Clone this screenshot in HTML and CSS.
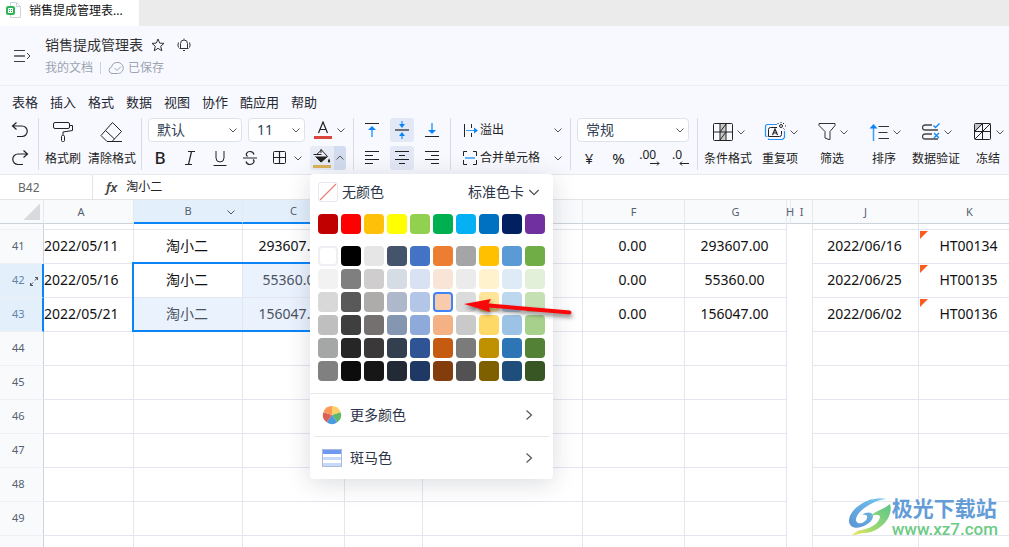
FILE: index.html
```html
<!DOCTYPE html>
<html lang="zh-CN">
<head>
<meta charset="utf-8">
<title>销售提成管理表</title>
<link rel="stylesheet" href="styles.css">
</head>
<body>
<svg class="defs" width="0" height="0" aria-hidden="true">
  <symbol id="chev" viewBox="0 0 12 12"><path d="M2.500 4.500 6 8l3.500-3.500" fill="none" stroke="currentColor"/></symbol>
  <symbol id="next" viewBox="0 0 12 12"><path d="M3.500 1.500 8.500 6l-5 4.500" fill="none" stroke="currentColor" stroke-width="1.200"/></symbol>
</svg>

<nav class="tabs">
  <a class="tab" href="#">
    <svg width="16" height="16" viewBox="0 0 16 16"><path d="M4.500.5h6l4 4v11h-10z" fill="#fff" stroke="#ccd3e0"/><path d="M10.500.5v4h4" fill="none" stroke="#ccd3e0"/><rect y="4" width="9" height="9" rx="2" fill="#2fb556"/><path d="M2.500 6.500h4v4h-4zM4.500 6.500v4M2.500 8.500h4" fill="none" stroke="#fff"/></svg>
    <span>销售提成管理表...</span>
  </a>
</nav>

<header class="doc">
  <button class="menu-toggle" aria-label="展开菜单"><svg width="18" height="14" viewBox="0 0 18 14" fill="none" stroke="#3c4043"><path d="M0 1.500h11M0 12.500h11"/><path d="M0 7h11" stroke="#777" stroke-width="2"/><path d="m13 4 3 3-3 3"/></svg></button>
  <div class="doc-info">
    <div class="doc-title">
      <h1>销售提成管理表</h1>
      <button aria-label="收藏"><svg width="14" height="14" viewBox="0 0 14 14"><path d="M7 1 8.700 5.100 13 5.400 9.700 8.200 10.800 12.800 7 10.300 3.200 12.800 4.300 8.200 1 5.400 5.300 5.100Z" fill="none" stroke="#333"/></svg></button>
      <button aria-label="提醒"><svg width="14" height="14" viewBox="0 0 14 14" fill="none" stroke="#333"><path d="M2.500 10.500h9M3.500 10.500V5.500a3.500 3.500 0 0 1 7 0v5M6 12.500h2M7 .5v1M1.500 4.500Q.3 7 1.500 9.500M12.500 4.500Q13.700 7 12.500 9.500"/></svg></button>
    </div>
    <div class="doc-sub">
      <a href="#">我的文档</a>
      <i></i>
      <svg width="17" height="14" viewBox="0 0 17 14" fill="none" stroke="#9aa3b2"><path d="M10 12.500H4a3.300 3.300 0 0 1-.3-6.500A5.500 5.500 0 0 1 9 1.500a5.500 5.500 0 0 1 1.500 11"/><path d="m6.500 7 2.500 2.500 4-4"/></svg>
      <span>已保存</span>
    </div>
  </div>
</header>

<section class="ribbon">
  <nav class="menus">
    <a href="#">表格</a><a href="#">插入</a><a href="#">格式</a><a href="#">数据</a><a href="#">视图</a><a href="#">协作</a><a href="#">酷应用</a><a href="#">帮助</a>
  </nav>
  <div class="tools">
    <div class="group history">
      <button class="tool" aria-label="撤销"><svg width="18" height="18" viewBox="0 0 18 18" fill="none" stroke="#222"><path d="M5.500 1.500 1.500 5l4 3.500M1.500 5H11a5 5 0 0 1 0 10.500H6" stroke-width="1.200"/></svg></button>
      <button class="tool" aria-label="重做"><svg width="18" height="18" viewBox="0 0 18 18" fill="none" stroke="#222"><path d="m12.500 1.500 4 3.500-4 3.500M16.500 5H7a5 5 0 0 0 0 10.500h5" stroke-width="1.200"/></svg></button>
    </div>

    <div class="group brushes">
      <button class="big"><span class="pic"><svg width="22" height="22" viewBox="0 0 22 22" fill="none" stroke="#222"><rect x="1.500" y="1.500" width="16" height="6" rx="1.500"/><path d="M17.500 4.500h3v5l-9.500 1.500v3"/><rect x="9.500" y="14.500" width="3" height="6" rx="1"/></svg></span>格式刷</button>
      <button class="big"><span class="pic"><svg width="24" height="22" viewBox="0 0 24 22" fill="none" stroke="#222"><path d="M7 20.500 1 14.500 12.500 1.500l9 9-9.500 10ZM5.500 9.500l9 8.500M7 20.500h15"/></svg></span>清除格式</button>
    </div>

    <div class="group">
      <div class="row">
        <label class="combo font"><select aria-label="字体"><option>默认</option></select><svg><use href="#chev"/></svg></label>
        <label class="combo size"><select aria-label="字号"><option>11</option></select><svg><use href="#chev"/></svg></label>
        <div class="split">
          <button class="tool ink" aria-label="字体颜色"><svg width="18" height="18" viewBox="0 0 18 18"><path d="M4.500 12 9 1l4.500 11M6 8.500h6" fill="none" stroke="#222" stroke-width="1.200"/><path d="M0 15h18v3H0z" fill="#d9473c"/></svg></button>
          <button class="arrow" aria-label="选择字体颜色"><svg><use href="#chev"/></svg></button>
        </div>
      </div>
      <div class="row marks">
        <button class="tool bold">B</button>
        <button class="tool" aria-label="斜体"><svg width="14" height="16" viewBox="0 0 14 16" fill="none" stroke="#222" stroke-width="1.200"><path d="M5 1.500h7M2 14.500h7M8.500 1.500l-3 13"/></svg></button>
        <button class="tool" aria-label="下划线"><svg width="14" height="16" viewBox="0 0 14 16" fill="none" stroke="#222"><path d="M3 1v7a4 4 0 0 0 8 0V1M.5 15.500h13"/></svg></button>
        <button class="tool" aria-label="删除线"><svg width="14" height="16" viewBox="0 0 14 16" fill="none" stroke="#222"><path d="M11 4.500C10.500 2.500 9 1.500 7 1.500c-3 0-5 3-2.500 5M3 11.500c.5 2 2 3 4 3 3 0 5.500-3 3-5M0 8h14" stroke-width="1.200"/></svg></button>
        <div class="split">
          <button class="tool" aria-label="边框"><svg width="14" height="14" viewBox="0 0 14 14" fill="none" stroke="#222"><rect x=".5" y=".5" width="12" height="12" rx="1"/><path d="M6.500.5v12M.5 6.500h12" stroke-width="1.200"/></svg></button>
          <button class="arrow" aria-label="选择边框"><svg><use href="#chev"/></svg></button>
        </div>
        <div class="split fill-split">
          <button class="tool" aria-label="填充颜色"><svg width="18" height="20" viewBox="0 0 18 20"><path d="M8 1v4M3.500 6.500 8.500 2l6 6.500" fill="none" stroke="#222"/><path d="M.5 6.500h8M2.500 8.500 8 14l6.500-5.500" fill="none" stroke="#222"/><path d="M2.500 8.500h12L8 14.500z" fill="#222"/><path d="M16 10.500c-1.500 2-1.500 4 0 4s1.500-2 0-4z" fill="#222"/><path d="M0 17h18v3H0z" fill="#d9b25c"/></svg></button>
          <button class="arrow open" aria-label="选择填充颜色" aria-expanded="true"><svg><use href="#chev"/></svg></button>

          <div class="palette">
            <div class="palette-head">
              <button class="no-color"><svg width="20" height="20" viewBox="0 0 20 20"><rect x=".5" y=".5" width="19" height="19" rx="2" fill="#fff" stroke="#e6e8f0"/><path d="M2 18 18 2" fill="none" stroke="#e8837c" stroke-width="1.200"/></svg>无颜色</button>
              <button class="card">标准色卡<svg><use href="#chev"/></svg></button>
            </div>
            <div class="swatches" id="standard"></div>
            <div class="swatches" id="theme"></div>
            <button class="palette-item"><svg width="20" height="20" viewBox="-10 -10 20 20"><path d="M0 0V-9A9 9 0 0 1 8.600-2.800Z" fill="#fdd06b"/><path d="M0 0 8.600-2.800A9 9 0 0 1 5.300 7.300Z" fill="#62b866"/><path d="M0 0 5.300 7.300A9 9 0 0 1-5.300 7.300Z" fill="#4a9be0"/><path d="M0 0-5.300 7.300A9 9 0 0 1-8.600-2.800Z" fill="#dc6055"/><path d="M0 0-8.600-2.800A9 9 0 0 1 0-9Z" fill="#fb9a58"/></svg><span>更多颜色</span><svg><use href="#next"/></svg></button>
            <hr>
            <button class="palette-item"><svg width="20" height="18" viewBox="0 0 20 18"><path d="M0 0h20v18H0z" fill="#fff"/><path d="M0 0h20v5H0z" fill="#6f98f0"/><path d="M0 8h20v3H0zM0 14h20v4H0z" fill="#c8d9fa"/><path d="M.5.5h19v17H.5z" fill="none" stroke="#a9bce0"/></svg><span>斑马色</span><svg><use href="#next"/></svg></button>
            <svg class="pointer" width="120" height="30" viewBox="0 0 120 30"><path d="M4 8 31 3 28.500 7.500 110 14.500q3 2 0 4L29 11.500 30 16Z" fill="#f80808"/></svg>
          </div>
        </div>
      </div>
    </div>

    <div class="group">
      <div class="row">
        <button class="tool" aria-label="顶端对齐"><svg width="14" height="14" viewBox="0 0 14 14"><path d="M0 .5h14" stroke="#222"/><path d="M7 6v8" stroke="#66b5ff" stroke-width="2"/><path d="m3 7 4-4 4 4z" fill="#0a84f7"/></svg></button>
        <button class="tool on" aria-label="垂直居中"><svg width="14" height="18" viewBox="0 0 14 18"><path d="M0 9h14" stroke="#222" stroke-width="1.200"/><path d="M7 0v4M7 14v4" stroke="#66b5ff" stroke-width="2"/><path d="m4 3 3 4 3-4zM4 15l3-4 3 4z" fill="#0a84f7"/></svg></button>
        <button class="tool" aria-label="底端对齐"><svg width="14" height="14" viewBox="0 0 14 14"><path d="M0 13.500h14" stroke="#222"/><path d="M7 0v8" stroke="#66b5ff" stroke-width="2"/><path d="m3 7 4 4 4-4z" fill="#0a84f7"/></svg></button>
      </div>
      <div class="row">
        <button class="tool" aria-label="左对齐"><svg width="14" height="14" viewBox="0 0 14 14" stroke="#222"><path d="M0 .5h14M0 4.500h8M0 8.500h14M0 12.500h8"/></svg></button>
        <button class="tool on" aria-label="居中"><svg width="14" height="14" viewBox="0 0 14 14" stroke="#222"><path d="M0 .5h14M4 4.500h6M0 8.500h14M4 12.500h6"/></svg></button>
        <button class="tool" aria-label="右对齐"><svg width="14" height="14" viewBox="0 0 14 14" stroke="#222"><path d="M0 .5h14M6 4.500h8M0 8.500h14M6 12.500h8"/></svg></button>
      </div>
    </div>

    <div class="group wraps">
      <button class="line"><svg width="16" height="14" viewBox="0 0 16 14"><path d="M2.500 1v13M9.500 1v4M9.500 10v4" stroke="#222"/><path d="M4 7.500h10" stroke="#3a9cf8"/><path d="m12 4.500 4 3-4 3z" fill="#0a84f7"/></svg><span>溢出</span><svg><use href="#chev"/></svg></button>
      <button class="line"><svg width="16" height="14" viewBox="0 0 16 14" fill="none" stroke="#222"><path d="M5 .5H1.500v13H5M11 .5h3.500v13H11"/><path d="M1.500 5v4M14.500 5v4" stroke="#f8f9fe" stroke-width="1.500"/><path d="M3 7h10" stroke="#66b5ff" stroke-width="2"/></svg><span>合并单元格</span><svg><use href="#chev"/></svg></button>
    </div>

    <div class="group numbers">
      <label class="combo"><select aria-label="数字格式"><option>常规</option></select><svg><use href="#chev"/></svg></label>
      <div class="row">
        <button class="tool sign">¥</button>
        <button class="tool sign">%</button>
        <button class="tool digits">.00<svg width="10" height="5" viewBox="0 0 10 5" fill="none" stroke="#222"><path d="M0 2.500h9M7 .5l2 2-2 2"/></svg></button>
        <button class="tool digits">.0<svg width="10" height="5" viewBox="0 0 10 5" fill="none" stroke="#222"><path d="M10 2.500H1M3 .5l-2 2 2 2"/></svg></button>
      </div>
    </div>

    <div class="group actions">
      <button class="big"><span class="pic"><svg width="20" height="18" viewBox="0 0 20 18"><path d="M7 1h6v16H7z" fill="#c9c9c9"/><g fill="none" stroke="#222"><rect x=".5" y=".5" width="19" height="17" rx="1"/><path d="M7 .5v17M13 .5v17M.5 9h19M7 9l6-8M7 17l6-8"/></g></svg><svg><use href="#chev"/></svg></span>条件格式</button>
      <button class="big"><span class="pic"><svg width="22" height="20" viewBox="0 0 22 20" fill="none"><path d="M13 2.500H3.500a2 2 0 0 0-2 2V14l2 .5M4.500 16.500v1h14l2-2V9" stroke="#2492f8" stroke-width="1.200"/><path d="M13 5.500H6.500a2 2 0 0 0-2 2v7h11a2 2 0 0 0 2-2V9" stroke="#222"/><path d="M8.500 13 11 7l2.500 6M9.500 11h3" stroke="#222" stroke-width="1.200"/><circle cx="17" cy="4" r="1.500" stroke="#222"/><path d="M17 0v1M21 4h1M20 1l-1 1M19.500 6.500l1 1M13.500 1l1 1" stroke="#222"/></svg><svg><use href="#chev"/></svg></span>重复项</button>
      <button class="big"><span class="pic"><svg width="18" height="18" viewBox="0 0 18 18"><path d="M1 .5h16v2l-5 6v8h-1l-4-1.500V8.500L1 2.500Z" fill="none" stroke="#333"/></svg><svg><use href="#chev"/></svg></span>筛选</button>
      <button class="big"><span class="pic"><svg width="20" height="18" viewBox="0 0 20 18"><path d="M4.500 4v14" stroke="#3a9cf8" stroke-width="1.500"/><path d="m.5 5.500 4-4.500 4 4.500z" fill="#0a84f7"/><path d="M9.500 3.500H20M9.500 9.500h9M9.500 15.500H20" stroke="#333" stroke-width="1.200"/></svg><svg><use href="#chev"/></svg></span>排序</button>
      <button class="big"><span class="pic"><svg width="18" height="18" viewBox="0 0 18 18" fill="none"><path d="M10 2H3a2 2 0 0 0 0 5h13M10 11H3a2 2 0 0 0 0 5h13" stroke="#444" stroke-width="1.300"/><path d="m11.500 2.500 2 2 4-4M12 10l5 5M17 10l-5 5" stroke="#0a84f7" stroke-width="1.300"/></svg><svg><use href="#chev"/></svg></span>数据验证</button>
      <button class="big"><span class="pic"><svg width="18" height="18" viewBox="0 0 18 18"><path d="M1 1h8L1 9z" fill="#c4c4c4"/><g fill="none" stroke="#222"><rect x=".5" y=".5" width="16" height="16" rx="1"/><path d="M8.500.5v16M.5 8.500h16M.5 8.500l8-8M1 16 16.500.5"/></g></svg><svg><use href="#chev"/></svg></span>冻结</button>
    </div>
  </div>
</section>

<div class="formula">
  <input class="name-box" aria-label="单元格" value="B42">
  <label for="fx">fx</label>
  <input id="fx" class="fx" value="淘小二">
</div>

<main class="sheet">
  <table>
    <colgroup><col class="c-num"><col class="c-a"><col class="c-b"><col class="c-m"><col class="c-d"><col class="c-e"><col class="c-m"><col class="c-m"><col class="c-h"><col class="c-i"><col class="c-j"><col class="c-m"></colgroup>
    <thead>
      <tr><th class="corner"></th><th>A</th><th class="sel">B<svg><use href="#chev"/></svg></th><th class="sel">C</th><th>D</th><th>E</th><th>F</th><th>G</th><th class="slim">H</th><th>I</th><th>J</th><th>K</th></tr>
    </thead>
    <tbody>
      <tr class="cut"><th></th><td></td><td></td><td></td><td></td><td></td><td></td><td></td><td></td><td></td><td></td><td></td></tr>
      <tr><th>41</th><td>2022/05/11</td><td>淘小二</td><td>293607.00</td><td></td><td></td><td>0.00</td><td>293607.00</td><td></td><td></td><td>2022/06/16</td><td class="flag">HT00134</td></tr>
      <tr><th class="sel">42<svg width="8" height="9" viewBox="0 0 8 9" fill="none" stroke="#555"><path d="M5 .5h2.500V3M7.500.5 5 3.500M.5 6v2.500H3M.5 8.500 3 5.500"/></svg></th><td>2022/05/16</td><td class="active">淘小二<span class="range"></span></td><td class="picked">55360.00</td><td></td><td></td><td>0.00</td><td>55360.00</td><td></td><td></td><td>2022/06/25</td><td class="flag">HT00135</td></tr>
      <tr><th class="sel">43</th><td>2022/05/21</td><td class="picked">淘小二</td><td class="picked">156047.00</td><td></td><td></td><td>0.00</td><td>156047.00</td><td></td><td></td><td>2022/06/02</td><td class="flag">HT00136</td></tr>
      <tr><th>44</th><td></td><td></td><td></td><td></td><td></td><td></td><td></td><td></td><td></td><td></td><td></td></tr>
      <tr><th>45</th><td></td><td></td><td></td><td></td><td></td><td></td><td></td><td></td><td></td><td></td><td></td></tr>
      <tr><th>46</th><td></td><td></td><td></td><td></td><td></td><td></td><td></td><td></td><td></td><td></td><td></td></tr>
      <tr><th>47</th><td></td><td></td><td></td><td></td><td></td><td></td><td></td><td></td><td></td><td></td><td></td></tr>
      <tr><th>48</th><td></td><td></td><td></td><td></td><td></td><td></td><td></td><td></td><td></td><td></td><td></td></tr>
      <tr><th>49</th><td></td><td></td><td></td><td></td><td></td><td></td><td></td><td></td><td></td><td></td><td></td></tr>
      <tr><th></th><td></td><td></td><td></td><td></td><td></td><td></td><td></td><td></td><td></td><td></td><td></td></tr>
    </tbody>
  </table>
</main>

<aside class="mark">
  <svg width="44" height="42" viewBox="0 0 44 42">
    <defs>
      <linearGradient id="blue" x1="1" y1="0" x2="0" y2="1"><stop offset="0" stop-color="#74c8ee"/><stop offset="1" stop-color="#5a93d6"/></linearGradient>
      <linearGradient id="green" x1="0" y1="1" x2="1" y2="0"><stop offset="0" stop-color="#f0e85a"/><stop offset=".4" stop-color="#9ad873"/><stop offset="1" stop-color="#5cc68c"/></linearGradient>
    </defs>
    <path d="M35 1C18 2 2 13 1 24c-.5 7 6 9 12 7 6-2 12-6 12-11 0-4-6-5-11-1 3-1 6 0 5 3-1 4-6 6-9 5-4-2-2-8 4-13C21 8 29 4 38 3c-6-1-12 0-16 1 4-2 9-3 13-3Z" fill="url(#blue)"/>
    <path d="M42 8c4 13-10 28-25 29-4 0-8 2-13 2 3-3 7-5 10-5 10-2 17-7 18-13 0-3-6-3-10 0 4-6 13-7 20-13Z" fill="url(#green)"/>
  </svg>
  <div class="mark-text"><strong>极光下载站</strong><span>www.xz7.com</span></div>
</aside>
<script src="app.js"></script>
</body>
</html>
```

FILE: styles.css
```css
* { box-sizing: border-box; }

html, body { height: 100%; }

body {
  margin: 0;
  position: relative;
  display: flex;
  flex-direction: column;
  overflow: hidden;
  background: #fff;
  color: #222;
  font: 12px/18px "Noto Sans", "Noto Sans CJK SC", sans-serif;
}

button, input, select {
  font: inherit;
  color: inherit;
  margin: 0;
  padding: 0;
  border: 0;
  background: none;
}

a { color: inherit; text-decoration: none; }
svg { display: block; flex: none; }
.defs { position: absolute; }
svg:has(use) { width: 12px; height: 12px; color: #555; }

/* Tab strip */
.tabs { display: flex; flex: none; height: 26px; background: #ebebeb; }
.tab { display: flex; gap: 7px; width: 139px; padding: 2px 0 0 6px; background: #fff; color: #111; }

/* Document header */
.doc {
  display: flex;
  flex: none;
  align-items: center;
  gap: 13px;
  height: 60px;
  padding-left: 14px;
  background: #f8f9fe;
  border-bottom: 1px solid #eceef3;
}
.doc-info { display: flex; flex-direction: column; gap: 4px; }
.doc-title { display: flex; align-items: center; gap: 12px; }
.doc-title h1 { margin: 0 -4px 0 0; font-size: 14px; line-height: 20px; font-weight: 400; color: #333; }
.doc-sub { display: flex; align-items: center; gap: 3px; color: #9aa3b2; }
.doc-sub i { width: 1px; height: 12px; margin: 0 4px; background: #cdd2dc; }

/* Ribbon */
.ribbon {
  flex: none;
  background: #f8f9fe;
  border-bottom: 1px solid #e6e8ed;
  position: relative;
  z-index: 2;
}
.menus { display: flex; gap: 12px; padding: 6px 12px; font-size: 13px; line-height: 20px; color: #1f2733; }
.tools { display: flex; padding-bottom: 4px; }
.group {
  display: flex;
  flex: none;
  flex-direction: column;
  gap: 4px;
  height: 52px;
  padding: 0 6px;
  border-right: 1px solid #d9dce4;
}
.row { display: flex; gap: 6px; }
.tool { display: flex; flex: none; align-items: center; justify-content: center; width: 24px; height: 24px; border-radius: 3px; }
.tool.on { background: #e2e8f6; }
.history { padding: 0 6px 0 8px; }
.brushes { flex-direction: row; gap: 7px; padding: 0 5px 0 6px; }
.big { display: flex; flex-direction: column; align-items: center; gap: 3px; white-space: nowrap; line-height: 20px; }
.pic { display: flex; align-items: center; justify-content: center; height: 28px; }
.pic svg + svg { margin-left: 2px; }

.combo {
  display: grid;
  align-items: center;
  height: 24px;
  border: 1px solid #dfe2ea;
  border-radius: 4px;
  background: #fff;
  color: #333f55;
  font-size: 14px;
  line-height: 22px;
}
.combo select { grid-area: 1 / 1; appearance: none; width: 100%; padding-left: 8px; }
.combo svg { grid-area: 1 / 1; justify-self: end; margin-right: 2px; pointer-events: none; }
.font { width: 94px; }
.size { width: 57px; }
.split { display: flex; position: relative; }
.arrow { display: flex; align-items: center; justify-content: center; width: 12px; height: 24px; }
.fill-split { background: #e6ebf6; border-radius: 3px; }
.arrow.open { background: #d3dcef; border-radius: 0 3px 3px 0; }
.arrow.open svg { transform: rotate(180deg); }
.bold { font-size: 17px; font-weight: 500; }

.wraps { width: 120px; padding-left: 11px; }
.line { display: flex; align-items: center; gap: 2px; height: 24px; }
.line span { flex: 1; text-align: left; }

.numbers { width: 127px; padding-right: 8px; }
.numbers .row { justify-content: space-between; gap: 0; }
.sign { font-size: 15px; }
.digits { flex-direction: column; gap: 1px; font-size: 12px; line-height: 10px; }
.digits svg { align-self: flex-end; }

.actions { display: grid; grid-template-columns: repeat(6, 52px); gap: 0; padding: 0 4px; border-right: 0; }
.actions .pic { padding-left: 4px; }

/* Fill colour panel */
.palette {
  position: absolute;
  top: 28px;
  left: 0;
  width: 243px;
  padding-top: 8px;
  border-radius: 4px;
  background: #fff;
  box-shadow: 0 4px 24px rgba(30, 40, 60, .16);
  font-size: 14px;
  line-height: 20px;
  color: #2b3448;
}
.palette-head { display: flex; justify-content: space-between; padding: 0 11px 0 8px; }
.palette-head button { display: flex; align-items: center; gap: 4px; }
.palette-head .card { gap: 2px; }
.card svg:has(use) { width: 16px; height: 16px; }
.swatches { display: grid; grid-template-columns: repeat(10, 20px); gap: 3px; padding: 12px 8px 0; }
#theme { padding-bottom: 12px; border-bottom: 1px solid #e6e8ee; }
.swatch { height: 20px; border-radius: 4px; }
.swatch.blank { border: 2px solid #eeeef4; }
.swatch.current { border: 2px solid #3f83f8; }
.palette-item { display: flex; align-items: center; gap: 8px; width: 100%; height: 42px; padding: 0 18px 0 12px; }
.palette-item span { flex: 1; text-align: left; }
.palette hr { height: 1px; margin: 0 4px; border: 0; background: #e6e8ee; }
.pointer { position: absolute; top: 122px; left: 150px; filter: drop-shadow(1px 3px 2px rgba(0, 0, 0, .5)); }

/* Formula bar */
.formula { display: flex; flex: none; align-items: center; height: 25px; border-bottom: 1px solid #e2e4e8; }
.name-box { width: 93px; height: 24px; padding-left: 18px; border-right: 1px solid #e2e4e8; color: #666; }
.formula label { padding: 0 9px 0 13px; font: italic 600 13px/20px "Noto Sans", sans-serif; color: #444; }
.fx { flex: 1; }

/* Grid */
.sheet { flex: 1; min-height: 0; overflow: hidden; }
table { table-layout: fixed; width: 1021px; border-collapse: separate; border-spacing: 0; }
.c-num { width: 44px; }
.c-a { width: 90px; }
.c-b { width: 109px; }
.c-m { width: 102px; }
.c-d { width: 78px; }
.c-e { width: 160px; }
.c-h { width: 4px; }
.c-i { width: 22px; }
.c-j { width: 106px; }

th { padding: 0; font-size: 11px; line-height: 16px; font-weight: 400; color: #56616f; background: #f9fafc; }
thead th { position: relative; height: 24px; border-right: 1px solid #e6e9ee; border-bottom: 1px solid #cdd3da; }
thead .sel { background: #e4effc; border-bottom: 2px solid #0a84f7; }
thead .sel svg { position: absolute; top: 6px; right: 5px; }
thead .corner { background: linear-gradient(135deg, transparent 50%, #d8dadd 50%) 24px 4px / 16px 16px no-repeat #f9fafc; }
thead .slim { z-index: 1; text-indent: -1px; }

tbody th { position: relative; height: 34px; padding: 0 0 2px 12px; text-align: left; border-right: 1px solid #cdd3da; border-bottom: 1px solid #edf0f4; }
tbody .sel { background: #e4effc; color: #5f83ab; border-right: 2px solid #0a84f7; }
tbody th svg { position: absolute; top: 13px; right: 4px; }
td {
  position: relative;
  padding: 0 2px 2px 0;
  font-size: 14px;
  line-height: 20px;
  text-align: center;
  white-space: nowrap;
  color: #111;
  border-right: 1px solid #e4e6ef;
  border-bottom: 1px solid #e4e6ef;
}
tr > :nth-child(2) { padding-right: 15px; }
td:nth-child(9) { padding: 0; border-bottom: 0; border-right: 0; }
td:nth-child(10) { border-bottom: 0; }
.cut th, .cut td { height: 6px; }
.picked { background: #eaf2fe; color: #4c5261; }
.range { position: absolute; z-index: 1; top: -2px; left: -2px; width: 213px; height: 70px; border: 2px solid #0a84f7; }
.flag::before { content: ""; position: absolute; top: 1px; left: 1px; border-top: 8px solid #ff5a1f; border-right: 8px solid transparent; }

/* Site mark */
.mark { position: absolute; right: 11px; bottom: 8px; display: flex; align-items: center; }
.mark-text { display: flex; flex-direction: column; }
.mark strong { font: 700 21px/24px "Noto Sans CJK SC", sans-serif; color: #649cd8; }
.mark span { font: 500 17px/20px Roboto, sans-serif; color: #6ccb84; }
```

FILE: app.js
```js
const standard = ["#c00000 #ff0000 #ffc107 #ffff00 #92d050 #00b050 #05b0f3 #0070c0 #002060 #7030a0"];

const theme = [
  "#ffffff #000000 #e7e6e6 #44546a #4472c4 #ed7d31 #a5a5a5 #ffc000 #5b9bd5 #70ad47",
  "#f2f2f2 #7f7f7f #cfcdcd #d6dce4 #d9e2f3 #f8e5d8 #ebebeb #fff2cc #deebf6 #e2efd9",
  "#d8d8d8 #595959 #aeabab #adb9ca #b4c6e7 #f7cbac #dbdbdb #fee599 #bdd7ee #c5e0b3",
  "#bfbfbf #3f3f3f #757070 #8496b0 #8eaadb #f4b183 #c9c9c9 #ffd965 #9cc3e5 #a8d08d",
  "#a5a7a6 #262626 #3a3838 #323f4f #2f5496 #c55a11 #7b7b7b #bf9000 #2e75b5 #538135",
  "#7f807f #0c0c0c #171616 #222a35 #1f3864 #833c0b #525252 #7f6000 #1e4e79 #375623"
];

function fill(id, rows) {
  const box = document.getElementById(id);
  rows.join(" ").split(" ").forEach((color) => {
    const b = document.createElement("button");
    b.className = "swatch";
    if (color === "#ffffff") b.classList.add("blank");
    if (color === "#f7cbac") b.classList.add("current");
    b.style.backgroundColor = color;
    b.setAttribute("aria-label", color);
    box.append(b);
  });
}

fill("standard", standard);
fill("theme", theme);
```
